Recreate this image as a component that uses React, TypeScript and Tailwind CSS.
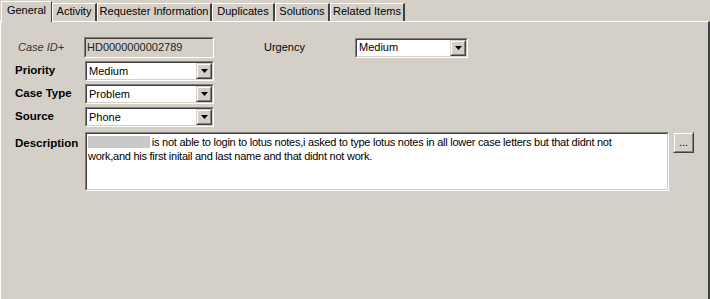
import React from 'react';

const tabs = [
	{ label: 'General', w: 'w-[51px]', active: true },
	{ label: 'Activity', w: 'w-[45px]' },
	{ label: 'Requester Information', w: 'w-[115px]' },
	{ label: 'Duplicates', w: 'w-[63px]' },
	{ label: 'Solutions', w: 'w-[55px]' },
	{ label: 'Related Items', w: 'w-[75px]' },
];

const Sunken: React.FC<{ className?: string; inner?: string; children?: React.ReactNode }> = ({
	className = '',
	inner = 'bg-white',
	children,
}) => (
	<div className={`border border-t-[#808080] border-l-[#808080] border-r-white border-b-white ${className}`}>
		<div className={`h-full w-full border border-t-[#404040] border-l-[#404040] border-r-[#d4d0c8] border-b-[#d4d0c8] ${inner}`}>
			{children}
		</div>
	</div>
);

const Raised: React.FC<{ className?: string; children?: React.ReactNode }> = ({ className = '', children }) => (
	<div className={`border border-t-[#d4d0c8] border-l-[#d4d0c8] border-r-[#404040] border-b-[#404040] bg-[#d4d0c8] ${className}`}>
		<div className="flex h-full w-full items-center justify-center border border-t-white border-l-white border-r-[#808080] border-b-[#808080]">
			{children}
		</div>
	</div>
);

const Combo: React.FC<{ value: string; className?: string }> = ({ value, className = '' }) => (
	<Sunken className={`h-[20px] ${className}`}>
		<div className="flex h-full items-center">
			<span className="flex-1 pl-[2px] leading-none">{value}</span>
			<Raised className="h-[16px] w-[16px]">
				<svg width="7" height="4" viewBox="0 0 7 4">
					<path d="M0 0h7L3.5 4z" fill="#000" />
				</svg>
			</Raised>
		</div>
	</Sunken>
);

export default function App() {
	return (
		<div className="flex h-[299px] w-[710px] flex-col bg-[#d4d0c8] font-['Tahoma','Liberation_Sans',sans-serif] text-[11px] text-black">
			<div className="relative z-10 flex h-[21px] items-end pl-[1px]">
				{tabs.map((t) =>
					t.active ? (
						<div
							key={t.label}
							className={`${t.w} -mb-[1px] flex h-[21px] items-center justify-center border-t border-l border-r border-t-white border-l-white border-r-[#404040] bg-[#d4d0c8] pb-[3px]`}
						>
							{t.label}
						</div>
					) : (
						<div
							key={t.label}
							className={`${t.w} flex h-[18px] items-center justify-center border-t border-l border-r-2 border-t-white border-l-white border-r-[#404040] pb-[2px]`}
						>
							{t.label}
						</div>
					)
				)}
			</div>
			<div className="flex-1 border-t border-l border-r-2 border-t-white border-l-white border-r-[#404040] pl-[14px] pr-[14px] pt-[15px]">
				<div className="flex flex-col gap-[3px]">
					<div className="flex items-center">
						<span className="w-[69px] pl-[3px] italic text-[#333]">Case ID+</span>
						<Sunken className="h-[21px] w-[130px]" inner="bg-[#d4d0c8]">
							<div className="flex h-full items-center pl-[1px] leading-none text-[#222]">HD0000000002789</div>
						</Sunken>
						<span className="ml-[50px] w-[91px]">Urgency</span>
						<Combo value="Medium" className="w-[113px]" />
					</div>
					<div className="flex items-center">
						<span className="w-[70px] text-[11.5px] font-bold">Priority</span>
						<Combo value="Medium" className="w-[129px]" />
					</div>
					<div className="flex items-center">
						<span className="w-[70px] text-[11.5px] font-bold">Case Type</span>
						<Combo value="Problem" className="w-[129px]" />
					</div>
					<div className="flex items-center">
						<span className="w-[70px] text-[11.5px] font-bold">Source</span>
						<Combo value="Phone" className="w-[129px]" />
					</div>
				</div>
				<div className="mt-[5px] flex items-start">
					<span className="w-[70px] pt-[3px] text-[11.5px] font-bold">Description</span>
					<Sunken className="h-[59px] w-[584px]">
						<div className="whitespace-nowrap pl-[1px] pt-[1px] leading-[14px] tracking-[-0.25px]">
							<span className="mr-[-1px] inline-block h-[12px] w-[62px] bg-[#c9c9c9] align-[-2px]" /> is not able to
							login to lotus notes,i asked to type lotus notes in all lower case letters but that didnt not
							<br />
							work,and his first initail and last name and that didnt not work.
						</div>
					</Sunken>
					<Raised className="ml-[4px] h-[21px] w-[21px]">
						<span className="leading-none">...</span>
					</Raised>
				</div>
			</div>
		</div>
	);
}
